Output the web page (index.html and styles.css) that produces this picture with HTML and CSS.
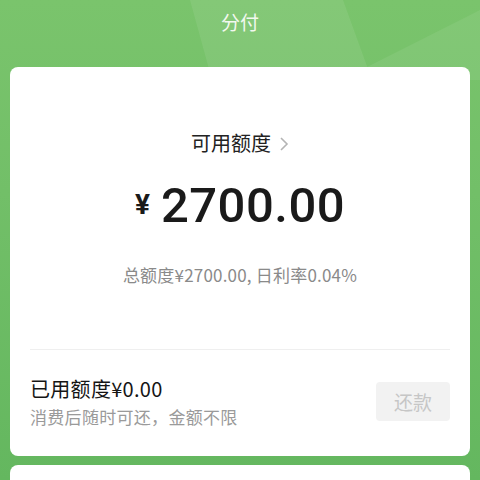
FILE: index.html
```html
<!DOCTYPE html>
<html lang="zh">
<head>
<meta charset="utf-8">
<title>分付</title>
<link rel="stylesheet" href="styles.css">
</head>
<body>
<div class="page">
  <svg class="bg-deco" width="480" height="120" viewBox="0 0 480 120" aria-hidden="true">
    <polygon points="190,0 343,0 372,80 212,80" fill="#ffffff" fill-opacity="0.08"/>
    <polygon points="367,67 480,10 480,80 367,80" fill="#ffffff" fill-opacity="0.07"/>
  </svg>
  <header class="header">分付</header>
  <section class="card">
    <div class="limit-label">可用额度
      <svg class="chev" width="10" height="16" viewBox="0 0 10 16"><polyline points="2,2 8,8 2,14" fill="none" stroke="#b4b4b4" stroke-width="1.6"/></svg>
    </div>
    <div class="amount"><span class="yen">¥</span><span class="num">2700.00</span></div>
    <div class="total">总额度¥2700.00, 日利率0.04%</div>
    <div class="divider"></div>
    <div class="row">
      <div class="row-text">
        <div class="used">已用额度¥0.00</div>
        <div class="sub">消费后随时可还，金额不限</div>
      </div>
      <button class="repay">还款</button>
    </div>
  </section>
  <section class="card card-next"></section>
</div>
</body>
</html>
```
FILE: styles.css
```css
html, body {
  margin: 0;
  padding: 0;
}
body {
  width: 480px;
  height: 480px;
  overflow: hidden;
  font-family: "Noto Sans CJK SC", "Noto Sans", sans-serif;
}
.page {
  position: relative;
  width: 480px;
  height: 480px;
  background: linear-gradient(180deg, #7ac46c 0%, #72bf68 40%, #64b75f 100%);
  overflow: hidden;
}
.bg-deco {
  position: absolute;
  left: 0;
  top: 0;
}
.header {
  position: relative;
  height: 67px;
  line-height: 44px;
  text-align: center;
  color: #f2f8ef;
  font-size: 19px;
}
.card {
  position: relative;
  margin: 0 10px;
  background: #fff;
  border-radius: 8px;
  padding: 0 20px 28px;
}
.limit-label {
  padding-top: 62px;
  line-height: 28px;
  font-size: 20px;
  color: #222;
  display: flex;
  justify-content: center;
  align-items: center;
  gap: 8px;
}
.chev {
  margin-top: 1px;
}
.amount {
  margin-top: 20px;
  height: 56px;
  display: flex;
  justify-content: center;
  align-items: center;
  color: #1a1a1a;
  font-family: Roboto, "Noto Sans", sans-serif;
}
.yen {
  font-size: 28px;
  font-weight: 700;
  margin-right: 11px;
  margin-top: -2px;
}
.num {
  font-size: 49px;
  font-weight: 500;
  letter-spacing: 0.5px;
}
.total {
  margin-top: 31px;
  line-height: 22px;
  font-size: 17px;
  letter-spacing: 0.2px;
  color: #8a8a8a;
  text-align: center;
}
.divider {
  margin-top: 63px;
  height: 1px;
  background: #efefef;
}
.row {
  margin-top: 26px;
  display: flex;
  align-items: center;
  justify-content: space-between;
}
.used {
  line-height: 26px;
  font-size: 20px;
  letter-spacing: 0.3px;
  color: #151515;
}
.sub {
  margin-top: 4px;
  line-height: 22px;
  font-size: 17px;
  letter-spacing: 0.3px;
  color: #9a9a9a;
}
.repay {
  width: 74px;
  height: 39px;
  margin-top: -2px;
  border: none;
  border-radius: 4px;
  background: #f2f2f2;
  color: #c6c6c6;
  font-family: "Noto Sans CJK SC", sans-serif;
  font-size: 19px;
  padding: 0;
}
.card-next {
  margin-top: 9px;
  height: 60px;
  padding: 0;
}
```
